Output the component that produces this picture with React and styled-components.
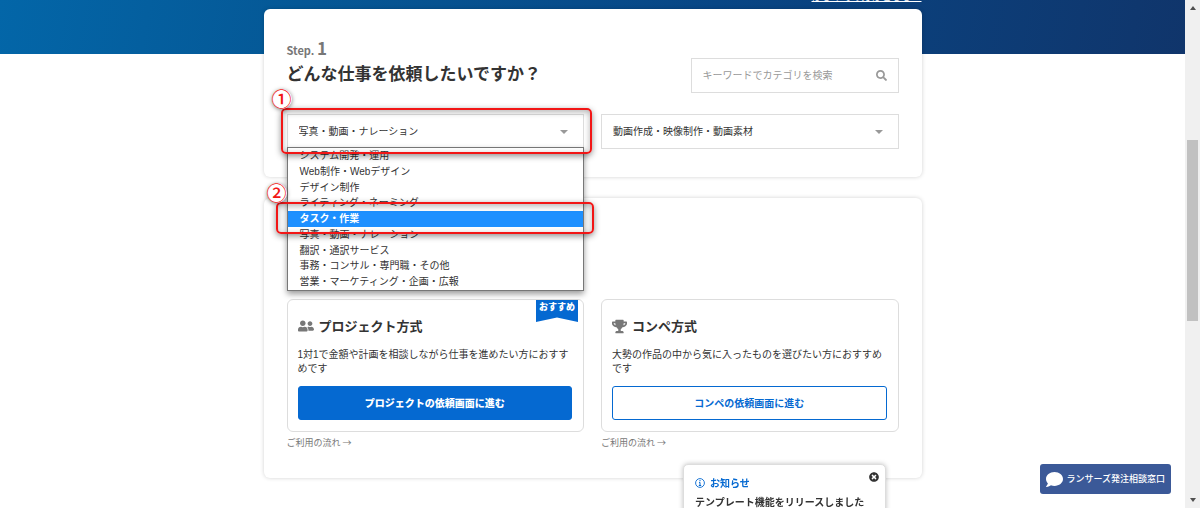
import React, { useState } from 'react';
import styled, { createGlobalStyle, css } from 'styled-components';
import { FaSearch, FaUserFriends, FaTrophy, FaTimesCircle, FaComment } from 'react-icons/fa';

const GlobalStyle = createGlobalStyle`
  * {
    box-sizing: border-box;
  }
  body {
    margin: 0;
    background: white;
    color: #333;
    font-family: "Liberation Sans", "Noto Sans CJK JP", sans-serif;
    font-size: 10px;
    line-height: 14px;
  }
  h1, h2, p, ul {
    margin: 0;
    padding: 0;
  }
  button, input, select {
    font: inherit;
    color: inherit;
  }
`

const Page = styled.div`
  display: flex;
  min-height: 100vh;
`

const Content = styled.div`
  flex: 1;
  min-width: 0;
  padding-bottom: 29px;
  background: linear-gradient(100deg, #0366a8 0%, #055896 25%, #084685 60%, #10356b 100%) no-repeat;
  background-size: 100% 54px;
`

const Container = styled.div`
  width: 100%;
  max-width: 658px;
  margin: 0 auto;
`

const TopBar = styled.div`
  display: flex;
  justify-content: flex-end;
  height: 9px;
`

const TopLink = styled.a`
  height: 14px;
  margin-top: -10px;
  color: white;
  text-decoration: underline;
  text-decoration-skip-ink: none;
`

const Panel = styled.section`
  position: relative;
  margin-bottom: 21px;
  padding: 28px 23px;
  background: white;
  border-radius: 6px;
  box-shadow: 0 0 4px rgba(0, 0, 0, 0.18);

  &:last-child {
    margin-bottom: 0;
    padding-top: 101px;
  }
`

const Head = styled.div`
  display: flex;
  justify-content: space-between;
  align-items: flex-end;
  margin-bottom: 21px;
`

const Step = styled.p`
  color: #777;
  font-family: "Noto Sans CJK JP", sans-serif;
  font-size: 11px;
  font-weight: bold;
  line-height: 21px;
`

const StepNumber = styled.span`
  font-size: 17px;
`

const Title = styled.h1`
  margin-bottom: 8px;
  font-family: "Noto Sans CJK JP", sans-serif;
  font-size: 17px;
  line-height: 24px;
`

const Columns = styled.div`
  display: grid;
  grid-template-columns: 1fr 1fr;
  gap: 17px;
`

const box = css`
  height: 35px;
  padding: 0 11px;
  background: white;
  border: 1px solid #ddd;
  border-radius: 0;
`

const Search = styled.label`
  ${box}
  display: flex;
  align-items: center;
  width: 208px;
  color: #999;
`

const SearchInput = styled.input`
  flex: 1;
  min-width: 0;
  padding: 0;
  border: 0;
  outline: 0;

  &::placeholder {
    color: #999;
  }
`

const Field = styled.div`
  position: relative;
`

const Select = styled.select`
  ${box}
  width: 100%;
  appearance: none;
`

const Caret = styled.span`
  position: absolute;
  top: 16px;
  right: 16px;
  border: 4px solid transparent;
  border-top-color: #999;
  border-bottom: 0;
  pointer-events: none;
`

const Options = styled.ul`
  position: absolute;
  z-index: 2;
  top: 33px;
  left: 0;
  display: grid;
  grid-auto-rows: 1fr;
  width: 100%;
  height: 144px;
  list-style: none;
  background: white;
  border: 1px solid #777;
  box-shadow: 0 3px 6px rgba(0, 0, 0, 0.4);
`

const Option = styled.li`
  padding: 0 12px;
  line-height: 15px;
  ${props => props.$active && css`
    background: #1e90ff;
    color: white;
    font-weight: bold;
  `}
`

const Marker = styled.div`
  position: absolute;
  z-index: 3;
  top: ${props => props.$top}px;
  left: ${props => props.$left}px;
  right: ${props => props.$right}px;
  height: ${props => props.$height}px;
  border: 2px solid #f21616;
  border-radius: 5px;
  box-shadow: 0 2px 6px rgba(0, 0, 0, 0.45), inset 0 2px 6px rgba(0, 0, 0, 0.3);
  pointer-events: none;
`

const MarkerNumber = styled.span`
  position: absolute;
  top: -21px;
  left: -11px;
  width: 20px;
  height: 20px;
  border-radius: 50%;
  background: white;
  box-shadow: 0 1px 4px rgba(0, 0, 0, 0.5);
  color: #f21616;
  font-family: "Noto Sans CJK JP", sans-serif;
  font-size: 20px;
  font-weight: 500;
  line-height: 20px;
  text-align: center;
`

const Card = styled.div`
  position: relative;
  padding: 16px 11px 11px 10px;
  background: white;
  border: 1px solid #ddd;
  border-radius: 6px;
`

const CardTitle = styled.h2`
  display: flex;
  align-items: center;
  gap: 5px;
  margin-bottom: 12px;
  font-family: "Noto Sans CJK JP", sans-serif;
  font-size: 13px;
  line-height: 20px;

  svg {
    color: #777;
  }
`

const CardText = styled.p`
  margin-bottom: 10px;
`

const Badge = styled.span`
  position: absolute;
  top: 0;
  right: 5px;
  width: 42px;
  height: 22px;
  background: #0569d1;
  clip-path: polygon(0 0, 100% 0, 100% 100%, 50% 80%, 0 100%);
  color: white;
  font-size: 9px;
  font-weight: 900;
  text-align: center;
`

const Button = styled.button`
  display: block;
  width: 100%;
  height: 34px;
  background: ${props => props.$primary ? '#0569d1' : 'white'};
  border: 1px solid #0569d1;
  border-radius: 3px;
  color: ${props => props.$primary ? 'white' : '#0569d1'};
  font-family: "Noto Sans CJK JP", sans-serif;
  font-weight: ${props => props.$primary ? 900 : 700};
  cursor: pointer;
`

const FlowLink = styled.a`
  display: inline-block;
  margin-top: 4px;
  color: #777;
  font-family: "Noto Sans CJK JP", sans-serif;
  font-size: 9px;
  text-decoration: none;
`

const Notice = styled.aside`
  position: fixed;
  z-index: 4;
  left: calc(50% + 83px);
  top: calc(100vh - 44px);
  width: 203px;
  height: 70px;
  padding: 11px;
  background: white;
  border: 1px solid #ddd;
  border-radius: 5px;
  box-shadow: 0 0 5px rgba(0, 0, 0, 0.25);
  font-family: "Noto Sans CJK JP", sans-serif;
  font-weight: bold;
`

const NoticeTitle = styled.p`
  display: flex;
  align-items: center;
  gap: 5px;
  margin-bottom: 5px;
  color: #0569d1;
`

const CloseBtn = styled.button`
  position: absolute;
  top: 7px;
  right: 6px;
  display: flex;
  padding: 0;
  border: 0;
  background: none;
  cursor: pointer;
`

const ChatBtn = styled.button`
  position: fixed;
  right: 29px;
  bottom: 14px;
  display: flex;
  align-items: center;
  gap: 3px;
  height: 30px;
  padding: 0 6px;
  background: #3b5998;
  border: 0;
  border-radius: 3px;
  color: white;
  font-family: "Noto Sans CJK JP", sans-serif;
  font-size: 9px;
  font-weight: 500;
  cursor: pointer;
`

const Scrollbar = styled.div`
  position: sticky;
  top: 0;
  display: flex;
  flex-direction: column;
  justify-content: space-between;
  align-items: center;
  width: 15px;
  height: 100vh;
  padding: 6px 0;
  background: #f0f0f0;
`

const Arrow = styled.span`
  border: 3px solid transparent;
  ${props => props.$up
    ? css`border-bottom: 4px solid #505050; border-top: 0;`
    : css`border-top: 4px solid #505050; border-bottom: 0;`}
`

const Thumb = styled.div`
  position: absolute;
  top: 140px;
  width: 11px;
  height: 181px;
  background: #c1c1c1;
`

const categories = [
  'システム開発・運用',
  'Web制作・Webデザイン',
  'デザイン制作',
  'ライティング・ネーミング',
  'タスク・作業',
  '写真・動画・ナレーション',
  '翻訳・通訳サービス',
  '事務・コンサル・専門職・その他',
  '営業・マーケティング・企画・広報',
];

const InfoIcon = () => (
  <svg width="10" height="10" viewBox="0 0 10 10" fill="none" stroke="currentColor">
    <circle cx="5" cy="5" r="4.4" strokeWidth="0.9" />
    <path d="M4 4.4h1v3M3.8 7.5h2.4M5 2v1.2" strokeWidth="1" />
  </svg>
)

const App = () => {
  const [category, setCategory] = useState('写真・動画・ナレーション');
  const [active, setActive] = useState('タスク・作業');

  return (
    <>
      <GlobalStyle />
      <Page>
        <Content>
          <Container>
            <TopBar>
              <TopLink href="#">はじめての方はこちらへ</TopLink>
            </TopBar>
            <Panel>
              <Head>
                <div>
                  <Step>Step. <StepNumber>1</StepNumber></Step>
                  <Title>どんな仕事を依頼したいですか？</Title>
                </div>
                <Search>
                  <SearchInput type="text" aria-label="カテゴリを検索" placeholder="キーワードでカテゴリを検索" />
                  <FaSearch size={11} />
                </Search>
              </Head>
              <Columns>
                <Field>
                  <Select aria-label="カテゴリ" value={category} onChange={e => setCategory(e.target.value)}>
                    {categories.map(name => <option key={name}>{name}</option>)}
                  </Select>
                  <Caret />
                  <Options role="listbox" aria-label="カテゴリ">
                    {categories.map(name => (
                      <Option
                        key={name}
                        role="option"
                        aria-selected={name === active}
                        $active={name === active}
                        onMouseEnter={() => setActive(name)}
                        onClick={() => setCategory(name)}
                      >
                        {name}
                      </Option>
                    ))}
                  </Options>
                  <Marker $top={-6} $left={-6} $right={-8} $height={46}>
                    <MarkerNumber>①</MarkerNumber>
                  </Marker>
                  <Marker $top={88} $left={-11} $right={-10} $height={32}>
                    <MarkerNumber>②</MarkerNumber>
                  </Marker>
                </Field>
                <Field>
                  <Select aria-label="サブカテゴリ">
                    <option>動画作成・映像制作・動画素材</option>
                  </Select>
                  <Caret />
                </Field>
              </Columns>
            </Panel>
            <Panel>
              <Columns>
                <div>
                  <Card>
                    <Badge>おすすめ</Badge>
                    <CardTitle><FaUserFriends size={16} />プロジェクト方式</CardTitle>
                    <CardText>1対1で金額や計画を相談しながら仕事を進めたい方におすすめです</CardText>
                    <Button $primary>プロジェクトの依頼画面に進む</Button>
                  </Card>
                  <FlowLink href="#">ご利用の流れ →</FlowLink>
                </div>
                <div>
                  <Card>
                    <CardTitle><FaTrophy size={15} />コンペ方式</CardTitle>
                    <CardText>大勢の作品の中から気に入ったものを選びたい方におすすめです</CardText>
                    <Button>コンペの依頼画面に進む</Button>
                  </Card>
                  <FlowLink href="#">ご利用の流れ →</FlowLink>
                </div>
              </Columns>
            </Panel>
          </Container>
        </Content>
        <Scrollbar>
          <Arrow $up />
          <Thumb />
          <Arrow />
        </Scrollbar>
      </Page>
      <Notice>
        <NoticeTitle><InfoIcon />お知らせ</NoticeTitle>
        <p>テンプレート機能をリリースしました</p>
        <CloseBtn aria-label="閉じる"><FaTimesCircle size={10} /></CloseBtn>
      </Notice>
      <ChatBtn><FaComment size={17} />ランサーズ発注相談窓口</ChatBtn>
    </>
  )
}

export default App;
